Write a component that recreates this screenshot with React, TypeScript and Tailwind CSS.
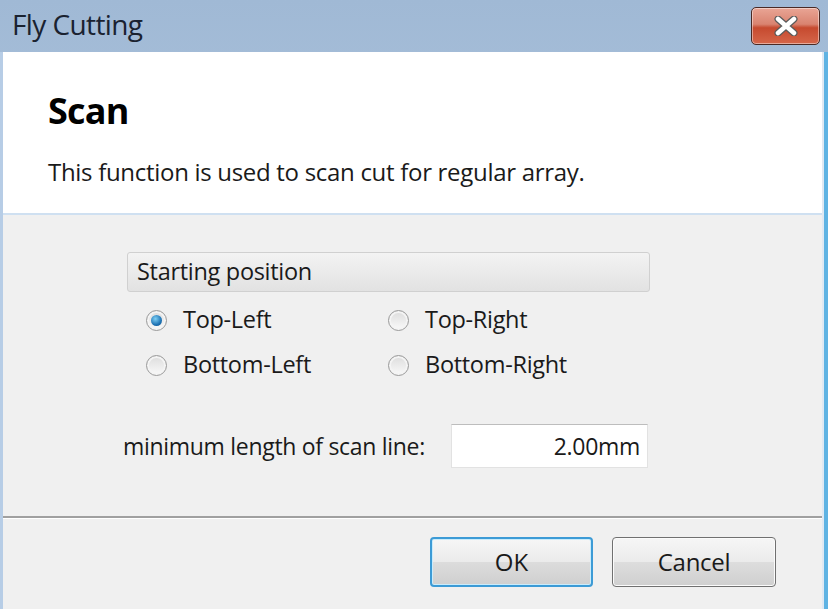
import { useState } from "react";

const font = { fontFamily: '"Open Sans", "Liberation Sans", Arial, sans-serif' };

function Radio({ label, checked, onClick }: { label: string; checked: boolean; onClick: () => void }) {
	return (
		<button type="button" onClick={onClick} className="flex items-center gap-[16px] h-[22px] text-[23.5px] leading-none text-[#1a1a1a]">
			<span className="w-[21px] h-[21px] shrink-0 rounded-full border border-[#9a9a9a] bg-[linear-gradient(180deg,#dcdcdc,#fafafa)] flex items-center justify-center shadow-[inset_0_0_0_2px_#f4f4f4]">
				{checked && (
					<span className="w-[11px] h-[11px] rounded-full bg-[radial-gradient(circle_at_40%_35%,#7fd0f5,#1f74b5_60%,#0d4d86)]" />
				)}
			</span>
			<span className="tracking-[-0.3px]">{label}</span>
		</button>
	);
}

function CloseButton() {
	return (
		<div className="w-[69px] h-[38px] rounded-[5px] border border-[#4a2a25] bg-[linear-gradient(180deg,#e9a595_0%,#d98370_45%,#c64a2f_55%,#d5664a_100%)] shadow-[inset_0_0_0_1px_rgba(255,255,255,0.45)] flex items-center justify-center">
			<svg width="26" height="20" viewBox="0 0 26 20">
				<path d="M5 3 L21 17 M21 3 L5 17" stroke="#5a5a5a" strokeWidth="7" strokeLinecap="round" />
				<path d="M5 3 L21 17 M21 3 L5 17" stroke="#ffffff" strokeWidth="4.5" strokeLinecap="round" />
			</svg>
		</div>
	);
}

export default function App() {
	const [pos, setPos] = useState("Top-Left");

	return (
		<div className="w-[828px] h-[609px] overflow-hidden flex flex-col bg-[linear-gradient(180deg,#a0b9d5,#c2d5ea)]" style={font}>
			{/* Title bar */}
			<div className="h-[52px] shrink-0 flex items-start">
				<div className="pl-[12px] pt-[10px] text-[28px] leading-none text-[#1a2230] tracking-[-0.6px]">Fly Cutting</div>
				<div className="ml-auto mr-[8px] mt-[7px]">
					<CloseButton />
				</div>
			</div>

			{/* Client area */}
			<div className="flex-1 flex min-h-0">
				<div className="w-[3px] bg-[#b7cde6]" />
				<div className="flex-1 flex flex-col min-w-0">
					<div className="h-[161px] shrink-0 bg-white px-[45px] pt-[41px]">
						<div className="text-[36px] font-bold text-black leading-none tracking-[-0.8px]">Scan</div>
						<div className="mt-[31px] text-[24px] text-[#1a1a1a] leading-none tracking-[-0.3px]">
							This function is used to scan cut for regular array.
						</div>
					</div>
					<div className="h-[2px] bg-[#cfe0f1]" />
					<div className="flex-1 bg-[#f0f0f0] flex flex-col">
						<div className="pl-[124px] pt-[37px]">
							<div className="w-[523px] h-[40px] rounded-[3px] border border-[#d0d0d0] bg-[linear-gradient(180deg,#f3f3f3,#e2e2e2)] flex items-center pl-[9px] text-[23.5px] leading-none text-[#1a1a1a] tracking-[-0.3px]">
								Starting position
							</div>
							<div className="grid grid-cols-[242px_1fr] gap-y-[23px] mt-[17px] pl-[19px]">
								{["Top-Left", "Top-Right", "Bottom-Left", "Bottom-Right"].map((p) => (
									<Radio key={p} label={p} checked={pos === p} onClick={() => setPos(p)} />
								))}
							</div>
						</div>
						<div className="flex items-center pl-[120px] mt-[48px]">
							<span className="text-[23px] leading-none text-[#1a1a1a] tracking-[-0.3px]">minimum length of scan line:</span>
							<div className="ml-auto mr-[174px] w-[197px] h-[44px] bg-white border border-[#e2e2e2] border-t-[#bdbdbd] flex items-center justify-end pr-[7px] text-[23px] leading-none text-[#1a1a1a] tracking-[-0.3px]">
								2.00mm
							</div>
						</div>
						<div className="mt-[48px] border-t-2 border-[#a0a0a0] shadow-[0_1px_0_#ffffff]" />
						<div className="flex justify-end gap-[19px] mt-[19px] pr-[46px]">
							<button type="button" className="w-[163px] h-[50px] rounded-[4px] border-2 border-[#3c9bd6] bg-[linear-gradient(180deg,#f6f6f6_0%,#ebebeb_50%,#dcdcdc_51%,#cfcfcf_100%)] shadow-[inset_0_0_0_1px_#c9ecfc] text-[24px] text-[#1a1a1a]">
								OK
							</button>
							<button type="button" className="w-[164px] h-[50px] rounded-[4px] border border-[#707070] bg-[linear-gradient(180deg,#f6f6f6_0%,#ebebeb_50%,#dddddd_51%,#cfcfcf_100%)] shadow-[inset_0_0_0_1px_#fbfbfb] text-[24px] text-[#1a1a1a] tracking-[-0.3px]">
								Cancel
							</button>
						</div>
					</div>
				</div>
				<div className="w-[2px] bg-[#dfe9f3]" />
				<div className="w-[4px] bg-[#5fb3e3]" />
			</div>
		</div>
	);
}
